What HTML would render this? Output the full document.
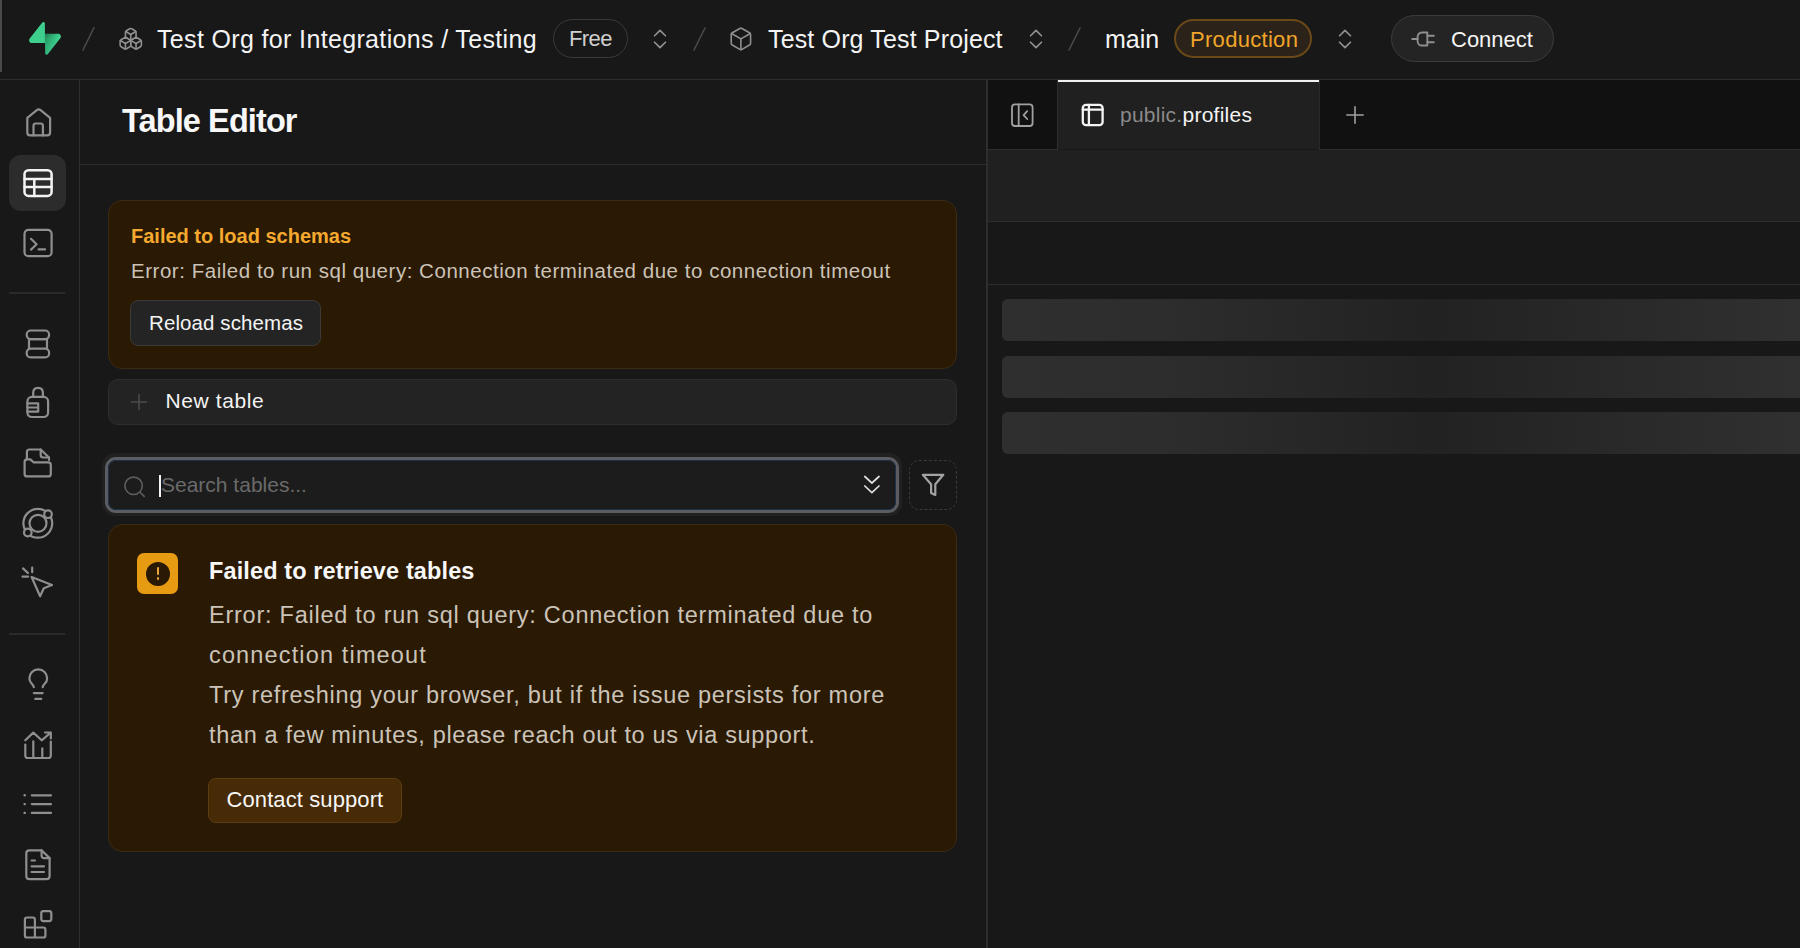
<!DOCTYPE html>
<html><head><meta charset="utf-8">
<style>
*{box-sizing:border-box;margin:0;padding:0}
html,body{width:1800px;height:948px;overflow:hidden;background:#181818;font-family:"Liberation Sans",sans-serif;color:#ededed}
.a{position:absolute}
.t{-webkit-font-smoothing:antialiased;position:absolute;white-space:nowrap;line-height:1}
svg{position:absolute;overflow:visible}
.ic{fill:none;stroke-linecap:round;stroke-linejoin:round}
.sk{border-radius:6px 0 0 6px;background:linear-gradient(90deg,#2f2f2f 0%,#2d2d2d 20%,#222 54%,#2a2a2a 80%,#303030 100%)}
</style></head><body>
<!-- top bar -->
<div class="a" style="left:0;top:0;width:1800px;height:79px;background:#181818"></div>
<div class="a" style="left:0;top:0;width:2px;height:72px;background:#4a4a4a"></div>
<div class="a" style="left:0;top:79px;width:1800px;height:1px;background:#2e2e2e"></div>


<!-- logo -->
<svg style="left:29px;top:22px" width="32" height="33" viewBox="0 0 109 113"><defs><linearGradient id="lg1" x1="53.97" y1="54.97" x2="94.16" y2="71.83" gradientUnits="userSpaceOnUse"><stop stop-color="#249361"/><stop offset="1" stop-color="#3ECF8E"/></linearGradient><linearGradient id="lg2" x1="36.16" y1="30.58" x2="54.48" y2="65.08" gradientUnits="userSpaceOnUse"><stop/><stop offset="1" stop-opacity="0"/></linearGradient></defs><path d="M63.7076 110.284C60.8481 113.885 55.0502 111.912 54.9813 107.314L53.9738 40.0627L99.1935 40.0627C107.384 40.0627 111.952 49.5228 106.859 55.9374L63.7076 110.284Z" fill="url(#lg1)"/><path d="M63.7076 110.284C60.8481 113.885 55.0502 111.912 54.9813 107.314L53.9738 40.0627L99.1935 40.0627C107.384 40.0627 111.952 49.5228 106.859 55.9374L63.7076 110.284Z" fill="url(#lg2)" fill-opacity="0.2"/><path d="M45.317 2.07103C48.1765 -1.53037 53.9745 0.442937 54.0434 5.041L54.4849 72.2922H9.83113C1.64038 72.2922 -2.92775 62.8321 2.1655 56.4175L45.317 2.07103Z" fill="#3ECF8E"/></svg>
<svg style="left:78px;top:24px" width="20" height="30"><line x1="16" y1="3.5" x2="5" y2="26" stroke="#4a4a4a" stroke-width="1.6" stroke-linecap="round"/></svg>
<!-- org -->
<svg style="left:117.6px;top:25.8px" width="25.5" height="25.5" viewBox="0 0 24 24" class="ic" stroke-width="1.5" stroke="#8f8f8f"><path d="M2.97 12.92A2 2 0 0 0 2 14.63v3.24a2 2 0 0 0 .97 1.71l3 1.8a2 2 0 0 0 2.06 0L12 19v-5.5l-5-3-4.03 2.42Z"/><path d="m7 16.5-4.74-2.85"/><path d="m7 16.5 5-3"/><path d="M7 16.5v5.17"/><path d="M12 13.5V19l3.970 2.38a2 2 0 0 0 2.06 0l3-1.8a2 2 0 0 0 .97-1.71v-3.24a2 2 0 0 0-.97-1.71L17 10.5l-5 3Z"/><path d="m17 16.5-5-3"/><path d="m17 16.5 4.74-2.85"/><path d="M17 16.5v5.17"/><path d="M7.97 4.42A2 2 0 0 0 7 6.13v4.37l5 3 5-3V6.13a2 2 0 0 0-.97-1.71l-3-1.8a2 2 0 0 0-2.06 0l-3 1.8Z"/><path d="M12 8 7.26 5.15"/><path d="m12 8 4.74-2.85"/><path d="M12 13.5V8"/></svg>
<div class="t" style="left:157px;top:27px;font-size:25px;color:#f4f4f4;letter-spacing:0.35px">Test Org for Integrations / Testing</div>
<div class="a" style="left:553px;top:19px;width:75px;height:39px;border:1.5px solid #3a3a3a;border-radius:20px"></div>
<div class="t" style="left:569px;top:28px;font-size:22px;color:#cfcfcf;letter-spacing:-0.6px">Free</div>
<svg style="left:647.2px;top:25.5px" width="26" height="26" viewBox="0 0 24 24" class="ic" stroke-width="1.6" stroke="#8f8f8f"><path d="m7 15 5 5 5-5"/><path d="m7 9 5-5 5 5"/></svg>
<svg style="left:690px;top:24px" width="20" height="30"><line x1="15" y1="4" x2="4" y2="26" stroke="#4a4a4a" stroke-width="1.6" stroke-linecap="round"/></svg>
<!-- project -->
<svg style="left:727.8px;top:25.6px" width="25.8" height="25.8" viewBox="0 0 24 24" class="ic" stroke-width="1.5" stroke="#8f8f8f"><path d="M21 8a2 2 0 0 0-1-1.73l-7-4a2 2 0 0 0-2 0l-7 4A2 2 0 0 0 3 8v8a2 2 0 0 0 1 1.73l7 4a2 2 0 0 0 2 0l7-4A2 2 0 0 0 21 16Z"/><path d="m3.3 7 8.7 5 8.7-5"/><path d="M12 22V12"/></svg>
<div class="t" style="left:768px;top:27px;font-size:25px;color:#f4f4f4;letter-spacing:0.15px">Test Org Test Project</div>
<svg style="left:1022.5px;top:25.5px" width="26" height="26" viewBox="0 0 24 24" class="ic" stroke-width="1.6" stroke="#8f8f8f"><path d="m7 15 5 5 5-5"/><path d="m7 9 5-5 5 5"/></svg>
<svg style="left:1065px;top:24px" width="20" height="30"><line x1="15" y1="4" x2="4" y2="26" stroke="#4a4a4a" stroke-width="1.6" stroke-linecap="round"/></svg>
<div class="t" style="left:1105px;top:27px;font-size:25px;color:#f4f4f4;letter-spacing:0px">main</div>
<div class="a" style="left:1174px;top:19px;width:138px;height:39px;border:2px solid #6a4818;border-radius:20px;background:#2b2319"></div>
<div class="t" style="left:1190px;top:28.5px;font-size:22px;color:#f0a52b;letter-spacing:0.3px">Production</div>
<svg style="left:1331.5px;top:25.5px" width="26" height="26" viewBox="0 0 24 24" class="ic" stroke-width="1.6" stroke="#8f8f8f"><path d="m7 15 5 5 5-5"/><path d="m7 9 5-5 5 5"/></svg>
<!-- connect -->
<div class="a" style="left:1391px;top:15px;width:163px;height:47px;border:1.5px solid #3c3c3c;border-radius:24px;background:#242424"></div>
<svg style="left:1410px;top:26px" width="26" height="26" viewBox="0 0 24 24" class="ic" stroke-width="1.7" stroke="#8f8f8f"><g transform="rotate(90 12 12)"><path d="M12 22v-5"/><path d="M9 8V2"/><path d="M15 8V2"/><path d="M18 8v5a4 4 0 0 1-4 4h-4a4 4 0 0 1-4-4V8Z"/></g></svg>
<div class="t" style="left:1451px;top:29px;font-size:22px;color:#f4f4f4">Connect</div>

<!-- left nav -->
<div class="a" style="left:9px;top:155px;width:57px;height:56px;border-radius:12px;background:#2c2c2c"></div>
<div class="a" style="left:9px;top:292px;width:56px;height:2px;background:#2a2a2a"></div>
<div class="a" style="left:9px;top:633px;width:56px;height:2px;background:#2a2a2a"></div>
<svg style="left:0;top:0" width="80" height="948" class="ic" stroke-width="2.2" stroke="#8f8f8f">
<!-- home -->
<path d="M27.3 117.8 L36.8 110.2 Q38.7 108.7 40.6 110.2 L50.1 117.8 V132.6 Q50.1 135.4 47.3 135.4 H30.1 Q27.3 135.4 27.3 132.6 Z"/>
<path d="M33.5 135.4 V125.8 Q33.5 123.5 35.8 123.5 H40.6 Q42.9 123.5 42.9 125.8 V135.4"/>
<!-- table active -->
<g stroke="#f4f4f4" stroke-width="2.5"><rect x="24.5" y="170.2" width="27.1" height="25.7" rx="4"/><path d="M24.5 178.9 H51.6 M24.5 187 H51.6 M34.3 178.9 V195.9"/></g>
<!-- terminal -->
<rect x="24.5" y="229.8" width="27.1" height="26.4" rx="4"/>
<path d="M31 238.8 L36.6 244.2 L31 249.6"/><path d="M38.6 249.4 H45"/>
<!-- database -->
<rect x="26.7" y="330.5" width="22.4" height="8.6" rx="4"/>
<path d="M29 339.1 V348.6 M47 339.1 V348.6 M29 339.1 H47"/>
<rect x="26.7" y="348.6" width="22.4" height="8.8" rx="4"/>
<!-- auth -->
<path d="M33.2 396 V393 Q33.2 387.9 38 387.9 Q42.9 387.9 42.9 393 V396"/>
<rect x="27.4" y="396.9" width="20.7" height="20.1" rx="4.5"/>
<path d="M27.4 403.4 H38.2 V411.6 H27.4 M27.4 407.5 H38.2"/>
<!-- storage -->
<path d="M26.9 459 V452 Q26.9 449.5 29.4 449.5 H40.7 L49 457.5 V460"/>
<path d="M40.7 449.5 V455 Q40.7 457.5 43.2 457.5 H49"/>
<path d="M24.6 462 Q24.6 459.4 27.2 459.4 H30.3 L33.5 462.3 H48.2 Q50.8 462.3 50.8 464.9 V473.9 Q50.8 476.4 48.2 476.4 H27.2 Q24.6 476.4 24.6 473.9 Z"/>
<!-- realtime -->
<circle cx="37.8" cy="523.3" r="14.4"/>
<circle cx="38" cy="523.3" r="8.5"/>
<circle cx="48" cy="514.2" r="3.8" fill="#181818"/>
<circle cx="27.8" cy="532.5" r="3.8" fill="#181818"/>
<!-- edge functions -->
<path d="M31.6 577 L52 585 L43.8 588.2 L40.1 596.3 Z"/>
<path d="M32.2 567.5 V572.2 M22.5 576.6 H28.1 M23 568.4 L27.9 573"/>
<!-- advisors bulb -->
<g transform="translate(20.5 666.4) scale(1.48)" stroke-width="1.49"><path d="M15 14c.2-1 .7-1.7 1.5-2.5 1-.9 1.5-2.2 1.5-3.5A6 6 0 0 0 6 8c0 1 .2 2.2 1.5 3.5.7.7 1.3 1.5 1.5 2.5"/><path d="M9 18h6"/><path d="M10 22h4"/></g>
<!-- reports -->
<path d="M25.3 740.3 L33.3 732.6 L41.7 740.3 L50.8 732.5 M45 732.5 H50.8 V738.4"/>
<path d="M25.3 744.5 V755.4 Q25.3 758 27.9 758 H48.2 Q50.8 758 50.8 755.4 V741.5 M33.3 741.3 V758 M42.3 748.4 V758"/>
<!-- logs -->
<path d="M24.6 795.3 H24.8 M24.6 804.1 H24.8 M24.6 812.9 H24.8" stroke-width="2.4"/>
<path d="M31.8 795.3 H51 M31.8 804.1 H51 M31.8 812.9 H51"/>
<!-- docs -->
<path d="M41.6 850.3 H29.4 Q26.3 850.3 26.3 853.4 V876 Q26.3 879.1 29.4 879.1 H46.5 Q49.6 879.1 49.6 876 V858.1 Z"/>
<path d="M41.6 850.3 V855.5 Q41.6 858.1 44.2 858.1 H49.6"/>
<path d="M31.6 860.5 H35 M31.6 866.3 H44 M31.6 872 H44"/>
<!-- integrations -->
<rect x="41.3" y="911.1" width="10" height="10" rx="2"/>
<path d="M34.9 927.5 V919.6 Q34.9 917.5 32.8 917.5 H27 Q24.9 917.5 24.9 919.6 V935.4 Q24.9 937.5 27 937.5 H43.3 Q45.4 937.5 45.4 935.4 V929.6 Q45.4 927.5 43.3 927.5 H24.9 M34.9 927.5 V937.5"/>
</svg>

<div class="a" style="left:79px;top:80px;width:1px;height:868px;background:#2e2e2e"></div>

<!-- panel -->
<div class="a" style="left:80px;top:164px;width:906px;height:1px;background:#2e2e2e"></div>
<div class="a" style="left:986px;top:80px;width:2px;height:868px;background:#2e2e2e"></div>


<div class="t" style="left:122px;top:104.8px;font-size:32.5px;font-weight:700;color:#f7f7f7;letter-spacing:-0.9px">Table Editor</div>
<!-- card1 -->
<div class="a" style="left:108px;top:200px;width:849px;height:169px;border:1px solid #3b2a14;border-radius:14px;background:#2a1903"></div>
<div class="t" style="left:131px;top:225.5px;font-size:20px;font-weight:700;color:#f5a92f">Failed to load schemas</div>
<div class="t" style="left:131px;top:260.5px;font-size:20.5px;color:#cbc3b8;letter-spacing:0.53px">Error: Failed to run sql query: Connection terminated due to connection timeout</div>
<div class="a" style="left:130px;top:300px;width:191px;height:46px;border:1px solid #3c3a36;border-radius:8px;background:#242424"></div>
<div class="t" style="left:149px;top:312.5px;font-size:20.5px;color:#f4f4f4;letter-spacing:0.1px">Reload schemas</div>
<!-- new table -->
<div class="a" style="left:108px;top:379px;width:849px;height:46px;border:1px solid #2e2e2e;border-radius:10px;background:#232323"></div>
<svg style="left:130px;top:393px" width="18" height="18" class="ic" stroke="#4c4c4c" stroke-width="1.5"><path d="M9 1.5V16.5M1.5 9H16.5"/></svg>
<div class="t" style="left:165.5px;top:390.2px;font-size:21px;color:#f4f4f4;letter-spacing:0.6px">New table</div>
<!-- search -->
<div class="a" style="left:102px;top:453px;width:800px;height:63px;border-radius:13px;background:#212121"></div>
<div class="a" style="left:105px;top:457px;width:794px;height:56px;border:3px solid #5b5d62;border-radius:11px;background:#1c1c1c"></div>
<div class="a" style="left:108px;top:460px;width:788px;height:50px;border:1px solid #1d3148;border-radius:8px"></div>
<svg style="left:120px;top:472px" width="30" height="30" class="ic" stroke="#5e5e5e" stroke-width="1.6"><circle cx="13.6" cy="13.8" r="8.7"/><path d="M20 20.2 L24.2 24.4"/></svg>
<div class="a" style="left:158.5px;top:474.5px;width:2.6px;height:22px;background:#f4f4f4"></div>
<div class="t" style="left:161px;top:473.8px;font-size:21px;color:#6a6a6a">Search tables...</div>
<svg style="left:860px;top:472px" width="24" height="26" class="ic" stroke="#dedede" stroke-width="1.7"><path d="M4.8 4.5 L11.9 11 L19 4.5 M4.8 14 L11.9 20.6 L19 14"/></svg>
<div class="a" style="left:909px;top:460px;width:48px;height:50px;border:1.5px dashed #3a3a3a;border-radius:10px"></div>
<svg style="left:918px;top:470px" width="30" height="30" class="ic" stroke="#a3a3a3" stroke-width="2.2"><path d="M4.8 4.8 H25.3 L17.3 14.3 V25 L13.1 23 V14.3 Z"/></svg>
<!-- card2 -->
<div class="a" style="left:108px;top:524px;width:849px;height:328px;border:1px solid #3b2a14;border-radius:14px;background:#2a1903"></div>
<div class="a" style="left:137px;top:553px;width:41px;height:41px;border-radius:7px;background:#e69b12"></div>
<div class="a" style="left:146px;top:561.5px;width:24px;height:24px;border-radius:50%;background:#2a1903"></div>
<div class="a" style="left:156.6px;top:567px;width:2.8px;height:8px;border-radius:1.4px;background:#e9a53a"></div>
<div class="a" style="left:156.6px;top:577px;width:2.8px;height:2.8px;border-radius:1.4px;background:#e9a53a"></div>
<div class="t" style="left:209px;top:560.3px;font-size:23.5px;font-weight:700;color:#f7f7f7;letter-spacing:0.12px">Failed to retrieve tables</div>
<div class="a" style="left:209px;top:603.2px;font-size:23.5px;line-height:40px;color:#cbc3b8;letter-spacing:0.7px;white-space:nowrap">
<div style="position:absolute;top:-8px;left:0;letter-spacing:0.75px">Error: Failed to run sql query: Connection terminated due to</div>
<div style="position:absolute;top:32px;left:0;letter-spacing:1.15px">connection timeout</div>
<div style="position:absolute;top:72px;left:0;letter-spacing:0.71px">Try refreshing your browser, but if the issue persists for more</div>
<div style="position:absolute;top:112px;left:0;letter-spacing:0.67px">than a few minutes, please reach out to us via support.</div>
</div>
<div class="a" style="left:208px;top:777.5px;width:194px;height:45px;border:1px solid #5e3d12;border-radius:8px;background:#472a06"></div>
<div class="t" style="left:226.5px;top:788.5px;font-size:22px;color:#f7f7f7;letter-spacing:0.1px">Contact support</div>

<!-- right -->
<div class="a" style="left:988px;top:80px;width:812px;height:69px;background:#111"></div>
<div class="a" style="left:1058px;top:80px;width:261px;height:69px;background:#202020"></div>
<div class="a" style="left:1058px;top:80px;width:261px;height:2px;background:#f0f0f0"></div>
<div class="a" style="left:988px;top:149px;width:70px;height:1px;background:#2e2e2e"></div><div class="a" style="left:1319px;top:149px;width:481px;height:1px;background:#2e2e2e"></div>
<div class="a" style="left:988px;top:150px;width:812px;height:71px;background:#202020"></div>
<div class="a" style="left:988px;top:221px;width:812px;height:1px;background:#2e2e2e"></div>
<div class="a" style="left:988px;top:284px;width:812px;height:1px;background:#2e2e2e"></div>

<svg style="left:1008px;top:100.5px" width="28" height="28" class="ic" stroke="#a0a0a0" stroke-width="1.8"><rect x="4" y="3.4" width="20.6" height="21.6" rx="3"/><path d="M10.7 3.4 V25"/><path d="M19.2 10.2 L15.6 14.1 L19.2 18"/></svg>
<div class="a" style="left:1057px;top:80px;width:1px;height:69px;background:#2e2e2e"></div>
<div class="a" style="left:1319px;top:80px;width:1px;height:69px;background:#2a2a2a"></div>
<svg style="left:1078px;top:101px" width="28" height="28" class="ic" stroke="#f4f4f4" stroke-width="2.3"><rect x="4.8" y="3.8" width="19.8" height="20.3" rx="3.2"/><path d="M4.8 8.7 H24.6 M10.9 3.8 V24.1"/></svg>
<div class="t" style="left:1120px;top:104px;font-size:21px;color:#8a8a8a;letter-spacing:0.25px">public.<span style="color:#f4f4f4">profiles</span></div>
<svg style="left:1343.3px;top:102.6px" width="24" height="24" class="ic" stroke="#a0a0a0" stroke-width="1.6"><path d="M12 3.8 V20.2 M3.8 12 H20.2"/></svg>
<!-- skeleton -->
<div class="a sk" style="left:1002px;top:299px;width:798px;height:42px"></div>
<div class="a sk" style="left:1002px;top:356px;width:798px;height:42px"></div>
<div class="a sk" style="left:1002px;top:412px;width:798px;height:42px"></div>
</body></html>
